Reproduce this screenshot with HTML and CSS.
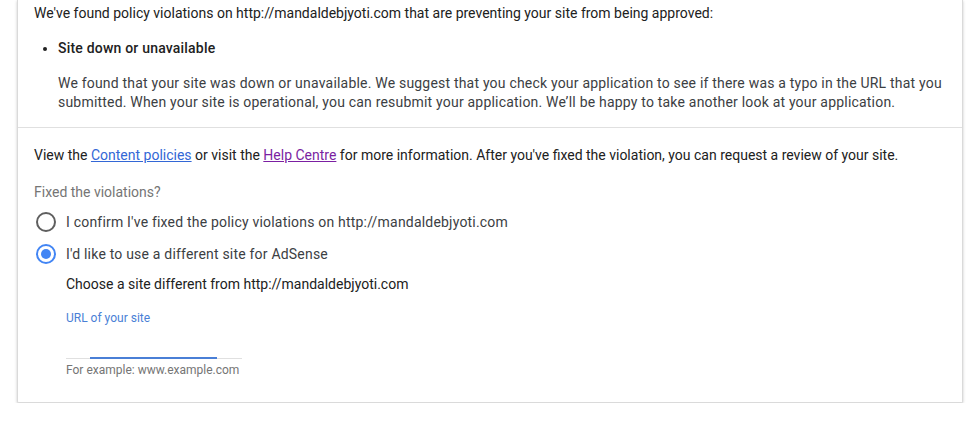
FILE: index.html
```html
<!DOCTYPE html>
<html>
<head>
<meta charset="utf-8">
<link rel="stylesheet" href="styles.css">
</head>
<body>
<div class="card">
  <div class="section top">
    <p class="intro">We've found policy violations on http://mandaldebjyoti.com that are preventing your site from being approved:</p>
    <ul class="violations">
      <li>
        <div class="v-title">Site down or unavailable</div>
        <p class="v-desc">We found that your site was down or unavailable. We suggest that you check your application to see if there was a typo in the URL that you submitted. When your site is operational, you can resubmit your application. We’ll be happy to take another look at your application.</p>
      </li>
    </ul>
  </div>
  <div class="section bottom">
    <p class="info">View the <a class="link" href="#">Content policies</a> or visit the <a class="link visited" href="#">Help Centre</a> for more information. After you've fixed the violation, you can request a review of your site.</p>
    <div class="q">Fixed the violations?</div>
    <div class="radio-row"><span class="radio"></span><span>I confirm I've fixed the policy violations on http://mandaldebjyoti.com</span></div>
    <div class="radio-row"><span class="radio checked"></span><span>I'd like to use a different site for AdSense</span></div>
    <div class="sub">
      <div class="choose">Choose a site different from http://mandaldebjyoti.com</div>
      <div class="field">
        <div class="label">URL of your site</div>
        <div class="line"><span class="focus"></span></div>
        <div class="hint">For example: www.example.com</div>
      </div>
    </div>
  </div>
</div>
</body>
</html>
```
FILE: styles.css
```css
html, body { margin: 0; padding: 0; background: #fff; }
body { font-family: Roboto, "Noto Sans", Arial, sans-serif; font-size: 14px; color: #212121; }
.card {
  margin: 0 0 0 17px;
  width: 944px;
  background: #fff;
  border: 1px solid #dadada;
  border-top: none;
  box-shadow: 0 1px 3px rgba(0,0,0,0.22);
  border-radius: 0 0 2px 2px;
}
.section { padding: 0 16px; }
.top { padding-top: 3px; padding-bottom: 15px; border-bottom: 1px solid #e0e0e0; }
p { margin: 0; }
.intro { line-height: 20px; }
.violations { margin: 15px 0 0 0; padding: 0 0 0 24px; }
.violations li { line-height: 20px; }
.v-title { font-weight: 500; letter-spacing: 0.2px; }
.v-desc { margin-top: 16px; line-height: 19px; color: #3c4043; letter-spacing: 0.2px; }
.bottom { padding-top: 17px; padding-bottom: 24px; }
.info { line-height: 20px; }
.link { color: #3367d6; text-decoration: underline; }
.link.visited { color: #7b1fa2; }
.q { margin-top: 17px; line-height: 20px; color: #757575; }
.radio-row { display: flex; align-items: center; gap: 10px; margin-top: 9px; height: 21px; line-height: 20px; color: #3c4043; letter-spacing: 0.2px; }
.radio-row + .radio-row { margin-top: 11px; }
.radio {
  margin-left: 2px;
  width: 16px; height: 16px;
  border: 2px solid #5f5f5f;
  border-radius: 50%;
  box-sizing: content-box;
  display: flex; align-items: center; justify-content: center;
  flex: none;
}
.radio.checked { border-color: #4285f4; }
.radio.checked::after { content: ""; width: 10px; height: 10px; border-radius: 50%; background: #4285f4; }
.sub { padding-left: 32px; }
.choose { margin-top: 10px; line-height: 20px; }
.field { width: 176px; margin-top: 16px; }
.label { font-size: 12px; color: #4a7fd6; line-height: 16px; }
.line { margin-top: 32px; height: 1px; background: #e0e0e0; position: relative; }
.focus { position: absolute; left: 24px; width: 127px; top: -1px; height: 2px; background: #4a7fd6; }
.hint { font-size: 12px; color: #757575; line-height: 16px; margin-top: 3px; }
```
